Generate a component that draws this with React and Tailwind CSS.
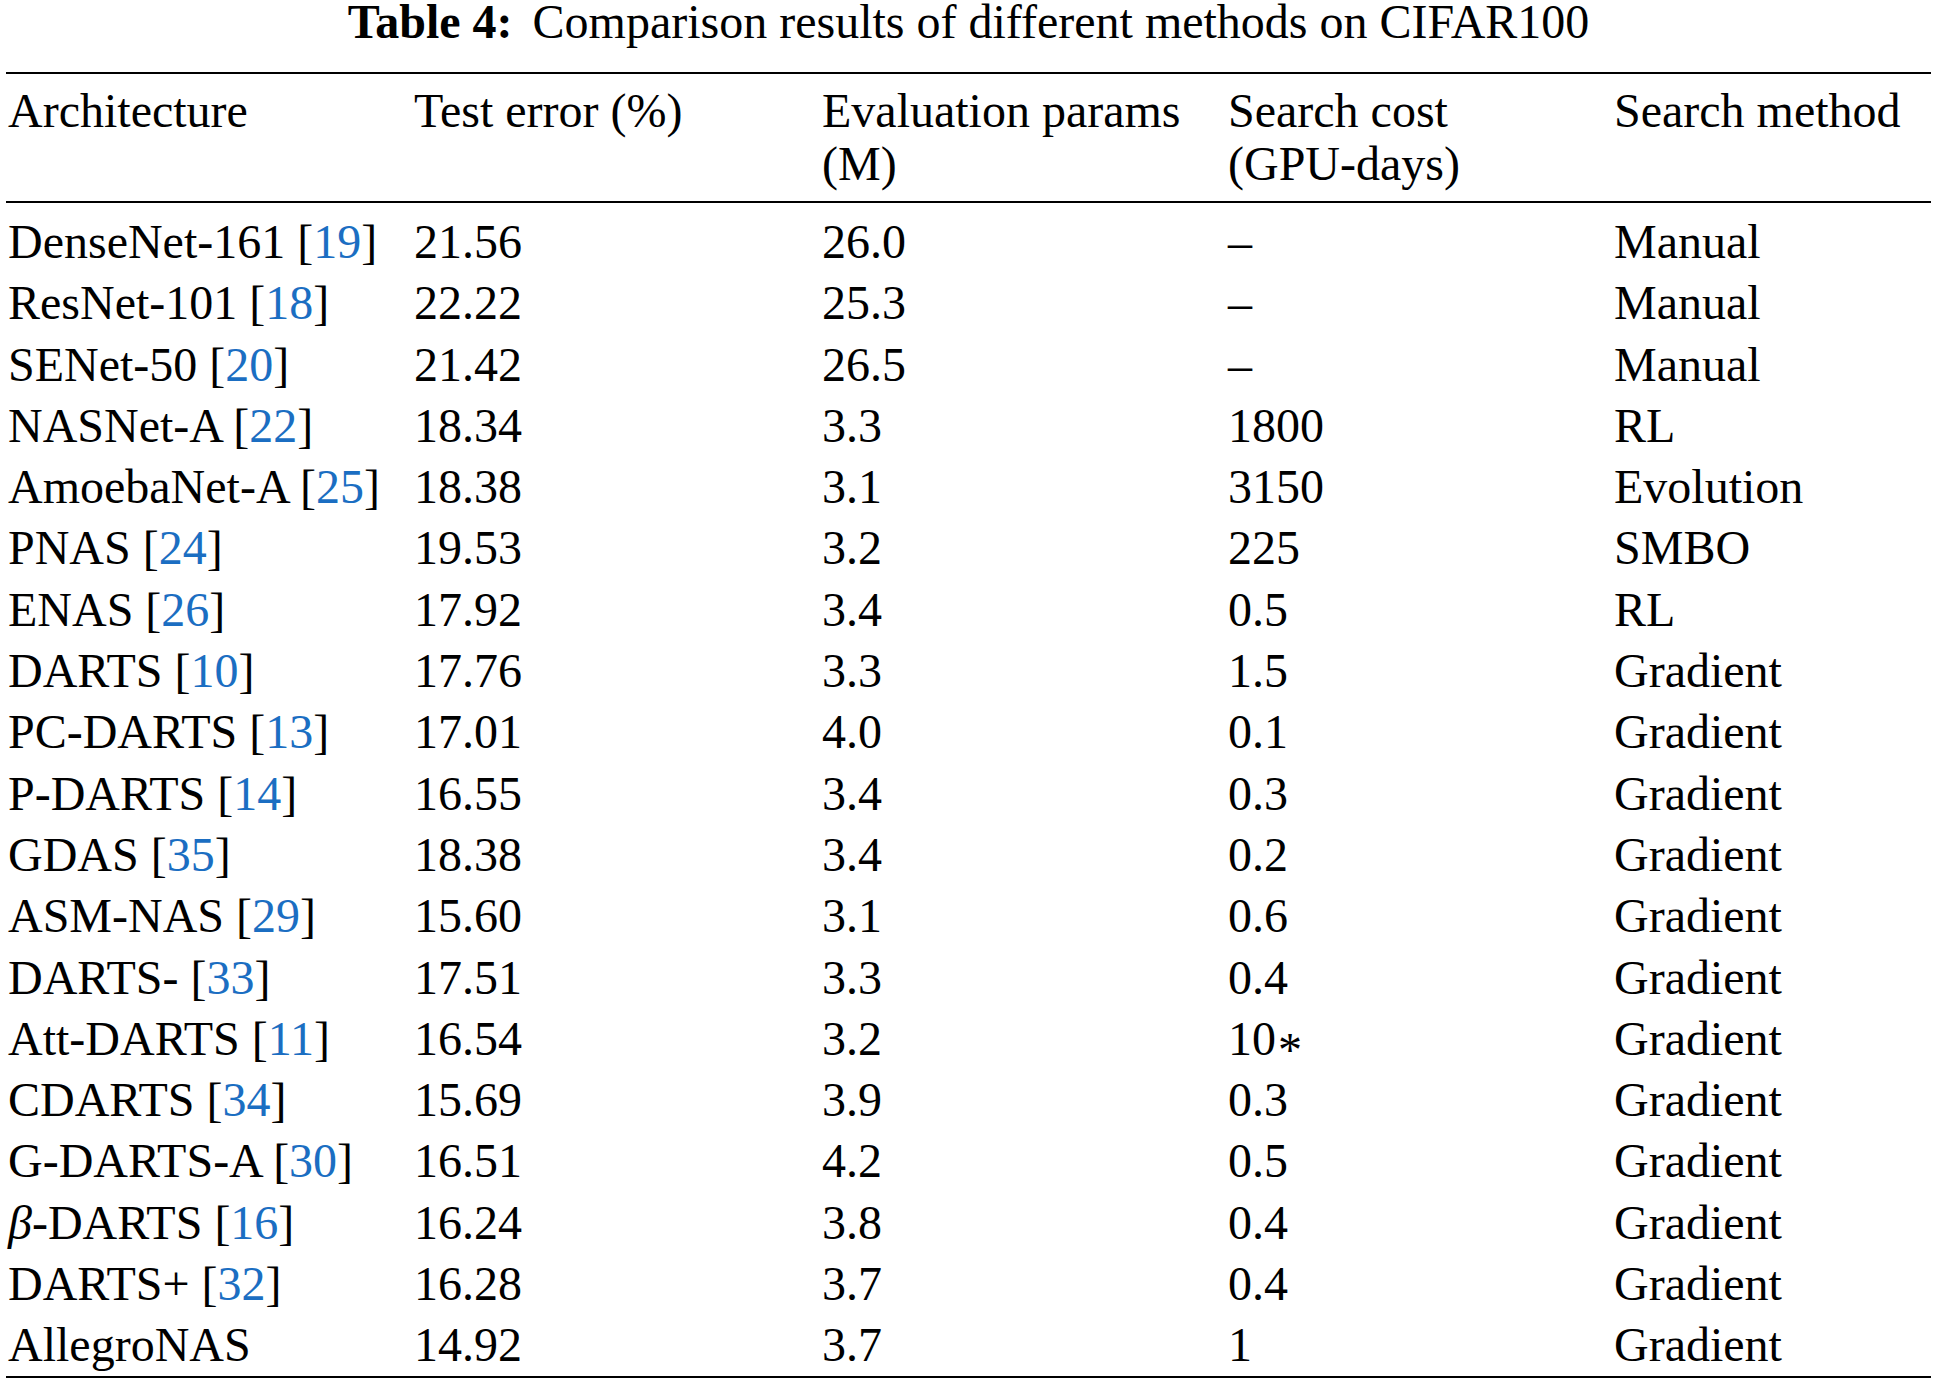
import React from "react";

const rows = [
  ["DenseNet-161", "19", "21.56", "26.0", "–", "Manual"],
  ["ResNet-101", "18", "22.22", "25.3", "–", "Manual"],
  ["SENet-50", "20", "21.42", "26.5", "–", "Manual"],
  ["NASNet-A", "22", "18.34", "3.3", "1800", "RL"],
  ["AmoebaNet-A", "25", "18.38", "3.1", "3150", "Evolution"],
  ["PNAS", "24", "19.53", "3.2", "225", "SMBO"],
  ["ENAS", "26", "17.92", "3.4", "0.5", "RL"],
  ["DARTS", "10", "17.76", "3.3", "1.5", "Gradient"],
  ["PC-DARTS", "13", "17.01", "4.0", "0.1", "Gradient"],
  ["P-DARTS", "14", "16.55", "3.4", "0.3", "Gradient"],
  ["GDAS", "35", "18.38", "3.4", "0.2", "Gradient"],
  ["ASM-NAS", "29", "15.60", "3.1", "0.6", "Gradient"],
  ["DARTS-", "33", "17.51", "3.3", "0.4", "Gradient"],
  ["Att-DARTS", "11", "16.54", "3.2", "STAR", "Gradient"],
  ["CDARTS", "34", "15.69", "3.9", "0.3", "Gradient"],
  ["G-DARTS-A", "30", "16.51", "4.2", "0.5", "Gradient"],
  ["BETA", "16", "16.24", "3.8", "0.4", "Gradient"],
  ["DARTS+", "32", "16.28", "3.7", "0.4", "Gradient"],
  ["AllegroNAS", null, "14.92", "3.7", "1", "Gradient"],
];

const grid = "grid grid-cols-[406px_408px_406px_386px_1fr]";

function Name({ name, cite }) {
  return (
    <span className="whitespace-nowrap">
      {name === "BETA" ? (
        <>
          <i>β</i>-DARTS
        </>
      ) : (
        name
      )}
      {cite && (
        <>
          {" "}[<span className="text-[#1b6ec2]">{cite}</span>]
        </>
      )}
    </span>
  );
}

function Cost({ v }) {
  if (v === "STAR") {
    return (
      <span className="whitespace-nowrap">
        10
        <span className="inline-block translate-y-[11px] ml-[2px]">*</span>
      </span>
    );
  }
  return v;
}

export default function App() {
  return (
    <div
      className="w-[1937px] h-[1383px] bg-white text-black overflow-hidden"
      style={{ fontFamily: '"Liberation Serif", "Times New Roman", serif' }}
    >
      <div className="flex justify-center h-[72px] pt-[1px] text-[48px] leading-[42px] whitespace-nowrap">
        <span>
          <b>Table 4:</b>
          <span className="inline-block w-[20px]"></span>
          Comparison results of different methods on CIFAR100
        </span>
      </div>
      <div className="mx-[6px] w-[1925px] border-t-2 border-b-2 border-black text-[48px]">
        <div className={`${grid} pt-[10px] pb-[11px] leading-[53px] border-b-2 border-black`}>
          <div className="pl-[2px]">Architecture</div>
          <div className="pl-[2px]">Test error (%)</div>
          <div className="pl-[2px] whitespace-nowrap">
            Evaluation params
            <br />
            (M)
          </div>
          <div className="pl-[2px]">
            Search cost
            <br />
            (GPU-days)
          </div>
          <div className="pl-[2px] whitespace-nowrap">Search method</div>
        </div>
        <div className="pt-[8px] leading-[61.3px]">
          {rows.map((r, i) => (
            <div key={i} className={grid}>
              <div className="pl-[2px]">
                <Name name={r[0]} cite={r[1]} />
              </div>
              <div className="pl-[2px]">{r[2]}</div>
              <div className="pl-[2px]">{r[3]}</div>
              <div className="pl-[2px]">
                <Cost v={r[4]} />
              </div>
              <div className="pl-[2px]">{r[5]}</div>
            </div>
          ))}
        </div>
      </div>
    </div>
  );
}
